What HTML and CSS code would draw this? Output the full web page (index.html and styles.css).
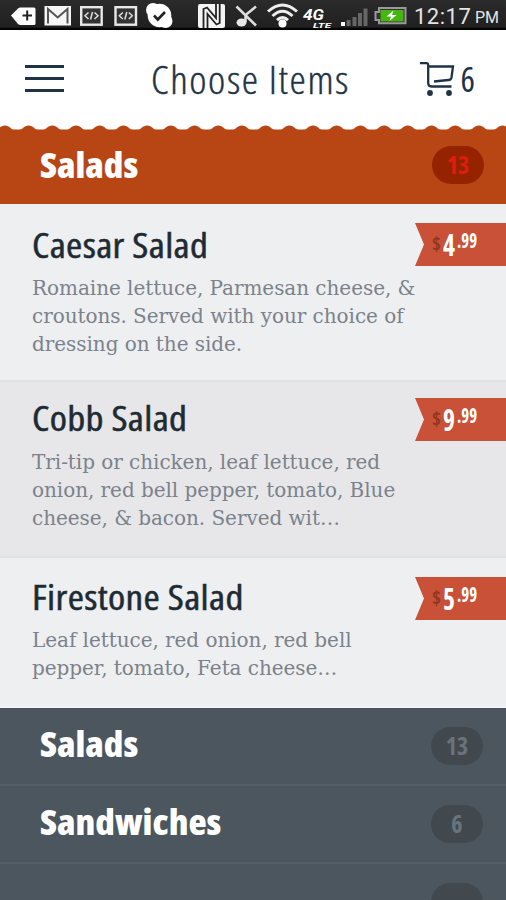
FILE: index.html
```html
<!DOCTYPE html>
<html lang="en">
  <head>
    <title>Choose Items</title>
    <meta charset="utf-8">
    <link rel="stylesheet" href="styles.css">
  </head>
  <body>

  <div id="statusbar">
    <svg width="36" height="30" viewBox="0 0 36 30">
      <path d="M11 15.500L18 8.500Q19 7.500 20.500 7.500H34Q35.500 7.500 35.500 9V23.500Q35.500 25 34 25H20.500Q19 25 18 24Z" fill="#fff"/>
      <path d="M22.500 15.500H32M27.200 10.500V20.500" stroke="#222" stroke-width="2"/>
    </svg>
    <svg width="40" height="30" viewBox="36 0 40 30">
      <rect x="44.500" y="6" width="26.500" height="19.500" fill="#f6f6f6"/>
      <path d="M48 23.500V9L57.700 17.500L67.500 9V23.500" fill="none" stroke="#555" stroke-width="2"/>
    </svg>
    <svg width="33" height="30" viewBox="76 0 33 30">
      <rect x="81.200" y="7.200" width="20.500" height="17.500" fill="#333" stroke="#e8e8e8" stroke-width="2.400"/>
      <path d="M88.500 12.500L85 15.800L88.500 19M94.500 12.500L98 15.800L94.500 19M92.500 12L90.500 19.500" fill="none" stroke="#ddd" stroke-width="1.500"/>
    </svg>
    <svg width="33" height="30" viewBox="109 0 33 30">
      <rect x="115.500" y="7.200" width="20.500" height="17.500" fill="#333" stroke="#e8e8e8" stroke-width="2.400"/>
      <path d="M122.800 12.500L119.300 15.800L122.800 19M128.800 12.500L132.300 15.800L128.800 19M126.800 12L124.800 19.500" fill="none" stroke="#ddd" stroke-width="1.500"/>
    </svg>
    <svg width="43" height="30" viewBox="142 0 43 30">
      <circle cx="159.500" cy="15.500" r="11.800" fill="#fff"/>
      <circle cx="153" cy="10" r="7" fill="#fff"/>
      <circle cx="165.500" cy="21" r="7" fill="#fff"/>
      <path d="M154 15.500L157.800 19.500L165 12" fill="none" stroke="#222" stroke-width="2.600"/>
    </svg>
    <svg width="45" height="30" viewBox="185 0 45 30">
      <rect x="198" y="4" width="27" height="24" rx="2" fill="#f4f4f4"/>
      <path d="M203.500 28V9L207 7.500L216 18V4M219.700 4V23L216.500 24.500L207.500 14V28" fill="none" stroke="#222" stroke-width="1.800"/>
    </svg>
    <svg width="32" height="30" viewBox="230 0 32 30">
      <path d="M236.500 6.500L256 25.500M245.500 22V15L256 6.500" fill="none" stroke="#ddd" stroke-width="2.600"/>
      <ellipse cx="241.500" cy="22.500" rx="5" ry="4" fill="#e8e8e8"/>
    </svg>
    <svg width="38" height="30" viewBox="262 0 38 30">
      <path d="M268 11.500Q282.500 -1.500 297 11.500M272.500 16Q282.500 6.500 292.500 16M277 20.200Q282.500 15 288 20.200" fill="none" stroke="#eee" stroke-width="3"/>
      <circle cx="282.500" cy="23.500" r="4" fill="#fff"/>
    </svg>
    <svg width="36" height="30" viewBox="300 0 36 30">
      <text x="303" y="20" class="net" textLength="21" lengthAdjust="spacingAndGlyphs">4G</text>
      <text x="313" y="28" class="lte" textLength="18" lengthAdjust="spacingAndGlyphs">LTE</text>
    </svg>
    <svg width="34" height="30" viewBox="336 0 34 30">
      <rect x="341" y="22" width="4" height="4" fill="#fff"/>
      <path d="M348.500 26V20M354.500 26V17M360 26V13M365.500 26V8.500" stroke="#666" stroke-width="4"/>
    </svg>
    <svg width="40" height="30" viewBox="370 0 40 30">
      <path d="M379 8H405.500V23.300H379V20H375.500V12H379Z" fill="#333" stroke="#999" stroke-width="2"/>
      <rect x="380.500" y="10" width="23" height="11.500" fill="#47b50f"/>
      <path d="M393.500 10.500L386.500 16.500H391L389.500 21L396.500 15H392Z" fill="#fff"/>
    </svg>
    <span class="time">12:17</span><span class="pm">PM</span>
  </div>

  <div id="header">
    <div class="menu"><span></span><span></span><span></span></div>
    <h1>Choose Items</h1>
    <div class="cart">
      <svg width="36" height="36" viewBox="0 0 36 36" fill="none" stroke="#1f3345">
        <path d="M1 2.200H7.500Q9.200 2.200 9.200 4.500V22Q9.200 25.500 12.500 25.500H32.500" stroke-width="2.300"/>
        <path d="M9.500 5.500H34L32.500 16.500Q32 19 29.500 19L15 20.500" stroke-width="2.300"/>
        <circle cx="11" cy="32" r="2.900" fill="#1f3345" stroke="none"/>
        <circle cx="30" cy="32" r="2.900" fill="#1f3345" stroke="none"/>
      </svg>
      <span>6</span>
    </div>
  </div>

  <svg class="scallop" width="506" height="5">
    <defs>
      <pattern id="wave" x="-6.900" y="0" width="23.700" height="5" patternUnits="userSpaceOnUse">
        <path d="M0 4.500H3C6 4.500 7 0.500 11.850 0.500S17.700 4.500 20.700 4.500H23.700V5H0Z" fill="#b84614"/>
      </pattern>
    </defs>
    <rect width="506" height="5" fill="url(#wave)"/>
  </svg>
  <div class="category active">
    <h2>Salads</h2>
    <span class="count">13</span>
  </div>

  <div class="item caesar">
    <div class="text">
      <h3>Caesar Salad</h3>
      <p>Romaine lettuce, Parmesan cheese, &amp;<br>croutons. Served with your choice of<br>dressing on the side.</p>
    </div>
    <div class="price"><i>$</i><b>4</b><sup>.99</sup></div>
  </div>
  <div class="item cobb">
    <div class="text">
      <h3>Cobb Salad</h3>
      <p>Tri-tip or chicken, leaf lettuce, red<br>onion, red bell pepper, tomato, Blue<br>cheese, &amp; bacon. Served wit…</p>
    </div>
    <div class="price"><i>$</i><b>9</b><sup>.99</sup></div>
  </div>
  <div class="item firestone">
    <div class="text">
      <h3>Firestone Salad</h3>
      <p>Leaf lettuce, red onion, red bell<br>pepper, tomato, Feta cheese…</p>
    </div>
    <div class="price"><i>$</i><b>5</b><sup>.99</sup></div>
  </div>

  <div class="category">
    <h2>Salads</h2>
    <span class="count">13</span>
  </div>
  <div class="category">
    <h2>Sandwiches</h2>
    <span class="count">6</span>
  </div>
  <div class="category">
    <span class="count"></span>
  </div>

  </body>
</html>
```

FILE: styles.css
```css
* {
  box-sizing: border-box;
}

body {
  margin: 0;
  width: 506px;
  height: 900px;
  overflow: hidden;
  background: #fff;
  font-family: "Open Sans", "Noto Sans", sans-serif;
  font-stretch: 75%;
}

h1, h2, h3, p {
  margin: 0;
}

h1, h2, h3 {
  transform-origin: left;
}

svg {
  display: block;
  flex: none;
}

#statusbar {
  display: flex;
  height: 30px;
  background: linear-gradient(#2b2b2b, #202020 90%, #000 96%);
  color: #e4e4e4;
  font-family: Roboto, sans-serif;
  font-stretch: 100%;
  line-height: 33px;
}

.time {
  width: 61px;
  padding-left: 4px;
  font-size: 22px;
  letter-spacing: .5px;
}

.pm {
  padding-left: 4px;
  font-size: 16px;
  line-height: 35px;
}

.net {
  font: italic bold 15px Roboto, sans-serif;
  fill: #fff;
}

.lte {
  font: italic bold 7px Roboto, sans-serif;
  fill: #fff;
}

#header {
  display: flex;
  align-items: center;
  height: 95px;
  padding: 2px 31px 0 25px;
  color: #1f3345;
}

.menu {
  display: flex;
  flex-direction: column;
  gap: 9px;
  width: 39px;
}

.menu span {
  height: 3px;
  background: #1f3345;
}

#header h1 {
  flex: 1;
  margin-left: 87px;
  font-size: 39px;
  font-weight: 300;
  letter-spacing: 1.5px;
  white-space: nowrap;
  transform: scaleX(1.055);
  -webkit-text-stroke: .4px #1f3345;
}

.cart {
  display: flex;
  align-items: center;
  gap: 6px;
  font-size: 34px;
}

.category {
  display: flex;
  justify-content: space-between;
  align-items: center;
  height: 78px;
  padding: 0 23px 4px 40px;
  background: #4c565e;
  border-bottom: 2px solid #535f67;
}

.category.active {
  height: 74px;
  padding: 0 22px 4px 40px;
  background: #b84614;
  border: 0;
}

.category h2 {
  margin-top: -2px;
  color: #fff;
  font-size: 35px;
  font-weight: 800;
  transform: scaleX(1.07);
}

.count {
  width: 52px;
  height: 38px;
  margin-top: 3px;
  margin-left: auto;
  border-radius: 19px;
  background: #41494e;
  color: #68747d;
  font-size: 24px;
  font-weight: 700;
  line-height: 37px;
  text-align: center;
}

.active .count {
  margin-top: 0;
  background: #962300;
  color: #e01c0c;
}

.item {
  display: flex;
  justify-content: space-between;
  height: 178px;
  padding: 16px 0 0 32px;
  background: #eeeff1;
  border-bottom: 2px solid #dfe1e3;
}

.cobb {
  height: 176px;
  padding-top: 12px;
  background: #e7e7e9;
}

.firestone {
  height: 150px;
  padding-top: 14px;
  border-bottom-color: #f6f6f8;
}

.item h3 {
  height: 54px;
  color: #1e2b34;
  font-size: 35px;
  font-weight: 400;
  letter-spacing: .3px;
  line-height: 50px;
  transform: scaleX(1.12);
  -webkit-text-stroke: .5px #1e2b34;
}

.cobb h3 {
  line-height: 48px;
}

.item p {
  color: #7b828b;
  font-family: "DejaVu Serif", serif;
  font-size: 20px;
  font-stretch: 100%;
  letter-spacing: -.05px;
  line-height: 28px;
  white-space: nowrap;
}

.text {
  width: 383px;
}

.price {
  display: flex;
  width: 91px;
  height: 43px;
  margin-top: 4px;
  padding-left: 17px;
  background: #c95138;
  clip-path: polygon(0 0, 100% 0, 100% 100%, 0 100%, 9px 50%);
  color: #fff;
  line-height: 43px;
}

.caesar .price {
  margin-top: 3px;
}

.firestone .price {
  margin-top: 5px;
}

.price i {
  width: 11px;
  color: #903820;
  font-size: 19px;
  font-style: normal;
  font-weight: 700;
}

.price b {
  width: 14px;
  font-size: 30px;
  transform: scaleX(.85);
  transform-origin: left;
}

.price sup {
  font-size: 21px;
  font-weight: 700;
  line-height: 34px;
  transform: scaleX(.8);
  transform-origin: left;
}
```
